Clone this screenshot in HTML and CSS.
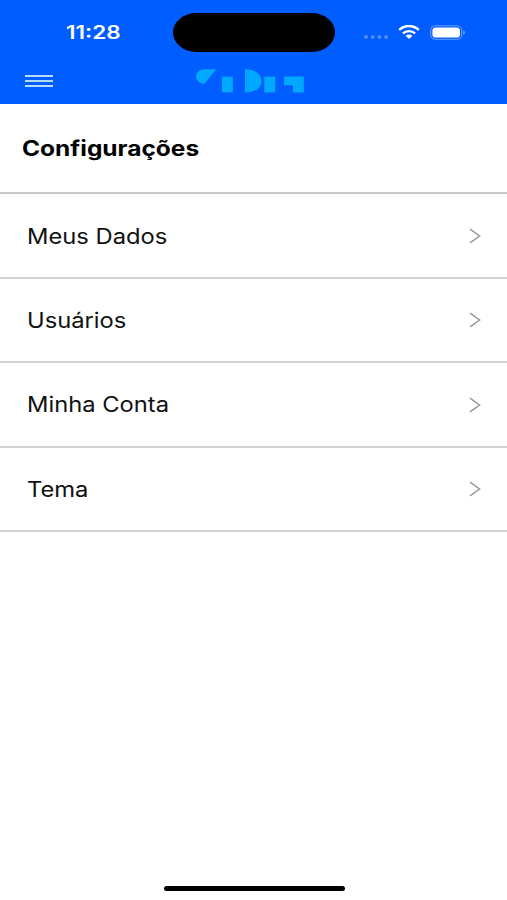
FILE: index.html
```html
<!DOCTYPE html>
<html lang="pt-BR">
<head>
  <meta charset="UTF-8" />
  <meta name="viewport" content="width=device-width, initial-scale=1.0"/>
  <title>Configurações</title>
  <link rel="stylesheet" href="styles.css">
</head>
<body>

  <header class="header">
    <div class="status-bar">
      <div class="time"><span class="wide">11:28</span></div>
      <div class="island"></div>
      <div class="status-icons">
        <svg class="signal" width="26" height="6" viewBox="0 0 26 6">
          <circle cx="3" cy="3" r="2"/>
          <circle cx="9.7" cy="3" r="2"/>
          <circle cx="16.4" cy="3" r="2"/>
          <circle cx="23.1" cy="3" r="2"/>
        </svg>
        <svg class="wifi" width="22" height="14" viewBox="0 0 22 14">
          <path d="M1.2 4.8C6.8-.3 15.2-.3 20.8 4.8" />
          <path d="M4.9 8.4C8.4 5.3 13.6 5.3 17.1 8.4" />
          <path class="dot" d="M7.6 10.8C9.5 9.1 12.5 9.1 14.4 10.8L11 13.9Z" />
        </svg>
        <svg class="battery" width="36" height="15" viewBox="0 0 36 15">
          <rect class="outline" x=".7" y=".7" width="31" height="13.6" rx="4.6"/>
          <rect class="level" x="2.4" y="2.4" width="27.6" height="10.2" rx="3.4"/>
          <path class="tip" d="M33.3 5.2C35.2 5.8 35.2 9.2 33.3 9.8Z"/>
        </svg>
      </div>
    </div>

    <div class="nav-bar">
      <button class="menu" aria-label="Menu">
        <span></span>
        <span></span>
        <span></span>
      </button>
      <svg class="logo" width="108" height="24" viewBox="0 0 108 24">
        <path d="M20.3.3H9C3.4.3 0 3.8 0 7.8c0 3.4 3 6 8 7.4Z"/>
        <path d="M26 7.6H36.8V23.4H26Z"/>
        <path d="M49 .3C59 .3 65.5 5 65.5 12S59 23.4 49 23.4Z"/>
        <path d="M68.3 7.6H79.2V23.4H68.3Z"/>
        <path d="M88 7.6H107.8V23.4H97V16.3H88Z"/>
      </svg>
    </div>
  </header>

  <main>
    <h1 class="title"><span class="wide">Configurações</span></h1>

    <ul class="settings">
      <li>
        <span class="wide">Meus Dados</span>
        <svg class="arrow" width="12" height="16" viewBox="0 0 12 16"><path d="M1 1.2L10.6 8L1 14.8"/></svg>
      </li>
      <li>
        <span class="wide">Usuários</span>
        <svg class="arrow" width="12" height="16" viewBox="0 0 12 16"><path d="M1 1.2L10.6 8L1 14.8"/></svg>
      </li>
      <li>
        <span class="wide">Minha Conta</span>
        <svg class="arrow" width="12" height="16" viewBox="0 0 12 16"><path d="M1 1.2L10.6 8L1 14.8"/></svg>
      </li>
      <li>
        <span class="wide">Tema</span>
        <svg class="arrow" width="12" height="16" viewBox="0 0 12 16"><path d="M1 1.2L10.6 8L1 14.8"/></svg>
      </li>
    </ul>
  </main>

  <div class="home-indicator"></div>

</body>
</html>
```
FILE: styles.css
```css
/* General styling */
* {
  box-sizing: border-box;
}

body {
  font-family: Inter, 'Liberation Sans', sans-serif;
  margin: 0;
  height: 100vh;
  display: flex;
  flex-direction: column;
  background: #fff;
  color: #111;
  overflow: hidden;
}

svg {
  display: block;
}

/* Wide lettering */
.wide {
  display: inline-block;
  transform: scaleX(1.25);
  transform-origin: left center;
}

/* Header */
.header {
  height: 104px;
  background: #005dff;
}

.status-bar {
  display: grid;
  grid-template-columns: 173px 162px 1fr;
  align-items: center;
  height: 64px;
}

.time {
  padding-left: 66px;
  color: #fff;
  font-size: 18px;
  font-weight: 600;
}

.island {
  height: 39px;
  background: #000;
  border-radius: 24px / 20px;
}

.status-icons {
  display: flex;
  align-items: center;
  padding-left: 28px;
}

.signal {
  margin-top: 9px;
  fill: #4d8dff;
}

.wifi {
  margin-left: 9px;
  fill: none;
  stroke: #fff;
  stroke-width: 2.4;
}

.wifi .dot {
  fill: #fff;
  stroke: none;
}

.battery {
  margin-left: 9.5px;
}

.battery .outline {
  fill: none;
  stroke: #669eff;
  stroke-width: 1.1;
}

.battery .level {
  fill: #fff;
}

.battery .tip {
  fill: #80afff;
}

.nav-bar {
  display: flex;
  padding: 5px 25px 0;
}

.menu {
  display: flex;
  flex-direction: column;
  gap: 3px;
  width: 28px;
  margin-top: 6px;
  padding: 0;
  border: none;
  background: none;
}

.menu span {
  width: 28px;
  height: 2px;
  background: #b5dcff;
}

.logo {
  margin-left: 143px;
  fill: #00a8ff;
}

/* Title */
.title {
  height: 90.4px;
  margin: 0;
  padding-left: 22px;
  border-bottom: 2px solid #c8c8c8;
  color: #000;
  font-size: 21px;
  font-weight: 700;
  line-height: 89px;
}

.title .wide {
  transform: scaleX(1.165);
}

/* Settings list */
.settings {
  margin: 0;
  padding: 0;
  list-style: none;
}

.settings li {
  display: flex;
  align-items: center;
  justify-content: space-between;
  height: 84.4px;
  padding: 1px 26px 0 27px;
  border-bottom: 2px solid #d2d2d2;
  font-size: 21px;
}

.settings .wide {
  transform: scaleX(1.13);
}

.arrow {
  fill: none;
  stroke: #999;
  stroke-width: 1.5;
}

.home-indicator {
  width: 181px;
  height: 5px;
  margin: auto auto 9px 164px;
  border-radius: 3px;
  background: #000;
}
```
